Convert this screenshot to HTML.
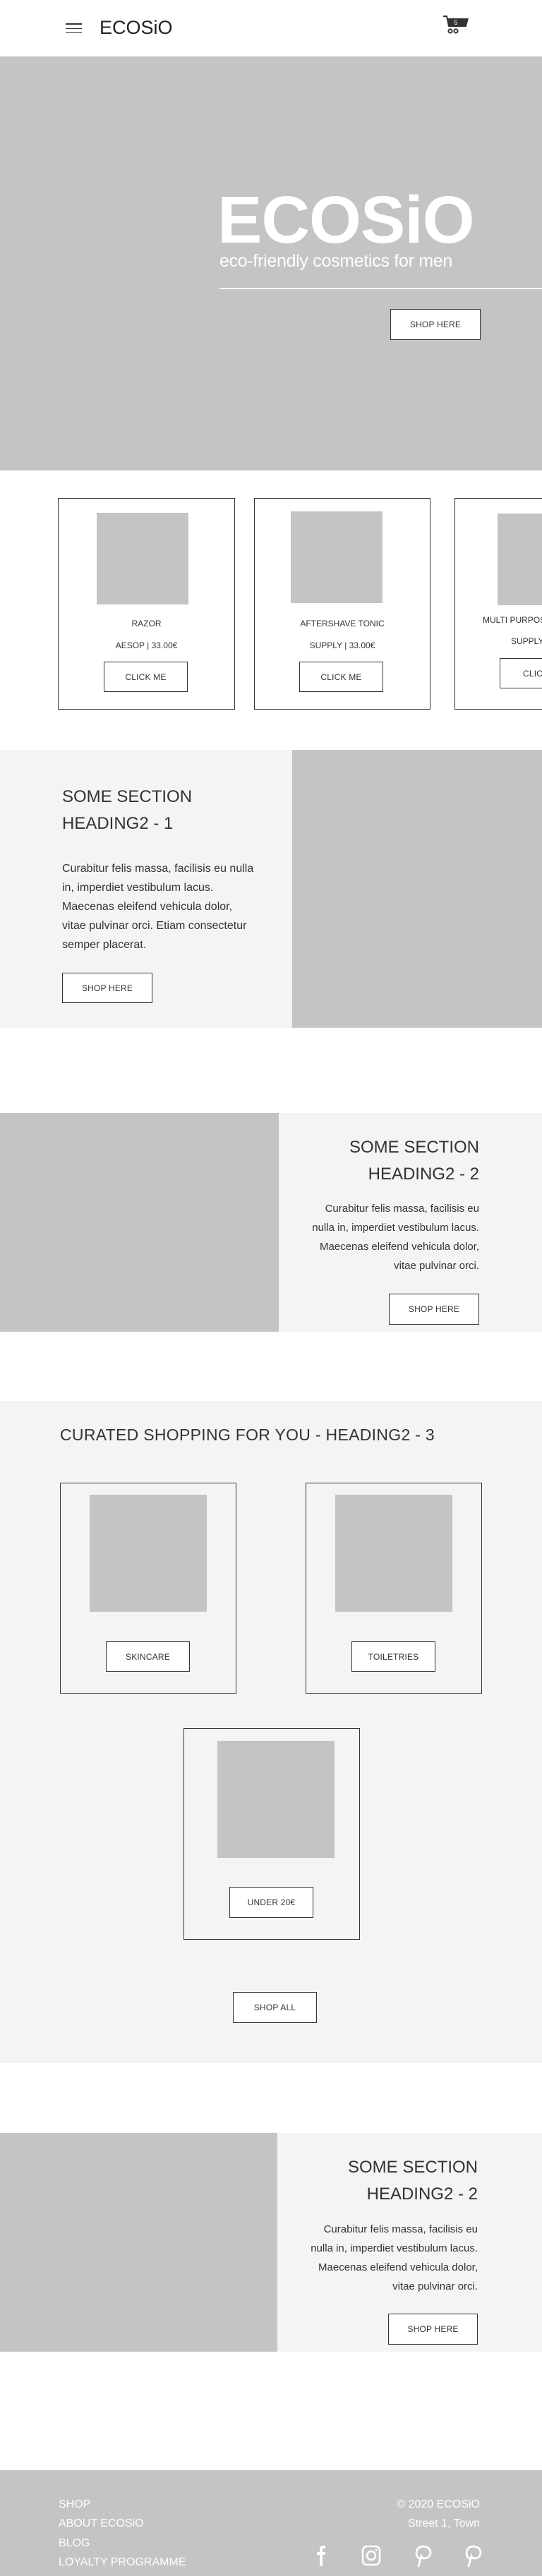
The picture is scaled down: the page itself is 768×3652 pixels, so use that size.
<!DOCTYPE html>
<html><head><meta charset="utf-8"><style>
*{margin:0;padding:0;box-sizing:border-box}
body{width:768px;height:3652px;position:relative;background:#fff;font-family:"Liberation Sans",sans-serif;color:#333;overflow:hidden}
.a{position:absolute}
.g{background:#c4c4c4}
.l{background:#f4f4f4}
.btn{position:absolute;border:1.5px solid #333;background:#fff;font-size:12px;color:#333;display:flex;align-items:center;justify-content:center;letter-spacing:.2px;white-space:nowrap;overflow:hidden}
.card{position:absolute;border:1.5px solid #333}
.t{position:absolute;font-size:12px;text-align:center;color:#333;white-space:nowrap}
h2{font-weight:normal;position:absolute;font-size:24px;line-height:38px;color:#333;white-space:nowrap}
p.b{position:absolute;font-size:15px;line-height:27px;color:#333;white-space:nowrap}
.f{position:absolute;color:#fff;font-size:16px;line-height:20px;white-space:nowrap}
</style></head><body>
<!-- header -->
<div class="a" style="left:93px;top:33px;width:23px;height:1.5px;background:#333"></div>
<div class="a" style="left:93px;top:39.5px;width:23px;height:1.5px;background:#333"></div>
<div class="a" style="left:93px;top:45.5px;width:23px;height:1.5px;background:#333"></div>
<div class="a" style="left:141px;top:24px;font-size:27px;line-height:30px;color:#222">ECOSiO</div>
<svg class="a" style="left:627px;top:21px" width="38" height="28" viewBox="0 0 38 28">
<path d="M1 2 H6 L9 16 H34" fill="none" stroke="#333" stroke-width="2"/>
<path d="M7 5 H37 L34 16 H9 Z" fill="#333"/>
<text x="19" y="14" font-size="9" fill="#fff" text-anchor="middle" font-family="Liberation Sans">5</text>
<circle cx="11" cy="23" r="2.6" fill="none" stroke="#333" stroke-width="2"/>
<circle cx="19" cy="23" r="2.6" fill="none" stroke="#333" stroke-width="2"/>
</svg>
<!-- hero -->
<div class="a g" style="left:0;top:80px;width:768px;height:587px"></div>
<div class="a" style="left:308px;top:262px;font-size:95px;font-weight:bold;color:#fff;line-height:100px;letter-spacing:-1px">ECOSiO</div>
<div class="a" style="left:311px;top:355px;font-size:25px;color:#fff;line-height:30px;letter-spacing:-0.3px;white-space:nowrap">eco-friendly cosmetics for men</div>
<div class="a" style="left:311px;top:408px;width:457px;height:1.5px;background:#fff"></div>
<div class="btn" style="left:553px;top:438px;width:128px;height:44px">SHOP HERE</div>
<!-- products -->
<div class="card" style="left:82px;top:706px;width:251px;height:300px"></div>
<div class="a g" style="left:137px;top:727px;width:130px;height:130px"></div>
<div class="t" style="left:82px;top:877px;width:251px">RAZOR</div>
<div class="t" style="left:82px;top:908px;width:251px">AESOP | 33.00€</div>
<div class="btn" style="left:147px;top:938px;width:119px;height:43px">CLICK ME</div>
<div class="card" style="left:360px;top:706px;width:250px;height:300px"></div>
<div class="a g" style="left:412px;top:725px;width:130px;height:130px"></div>
<div class="t" style="left:360px;top:877px;width:250px">AFTERSHAVE TONIC</div>
<div class="t" style="left:360px;top:908px;width:250px">SUPPLY | 33.00€</div>
<div class="btn" style="left:424px;top:938px;width:119px;height:43px">CLICK ME</div>
<div class="card" style="left:644px;top:706px;width:250px;height:300px"></div>
<div class="a g" style="left:705px;top:728px;width:130px;height:130px"></div>
<div class="t" style="left:684px;top:872px;text-align:left">MULTI PURPOSE SOAP</div>
<div class="t" style="left:724px;top:902px;text-align:left">SUPPLY | 33.00€</div>
<div class="btn" style="left:708px;top:933px;width:119px;height:43px;justify-content:flex-start;padding-left:32px">CLICK ME</div>
<!-- section 1 -->
<div class="a l" style="left:0;top:1063px;width:414px;height:394px"></div>
<div class="a g" style="left:414px;top:1063px;width:354px;height:394px"></div>
<h2 style="left:88px;top:1111px">SOME SECTION<br>HEADING2 - 1</h2>
<p class="b" style="left:88px;top:1218px;font-size:16px">Curabitur felis massa, facilisis eu nulla<br>in, imperdiet vestibulum lacus.<br>Maecenas eleifend vehicula dolor,<br>vitae pulvinar orci. Etiam consectetur<br>semper placerat.</p>
<div class="btn" style="left:88px;top:1379px;width:128px;height:43px">SHOP HERE</div>
<!-- section 2 -->
<div class="a g" style="left:0;top:1578px;width:395px;height:310px"></div>
<div class="a l" style="left:395px;top:1578px;width:373px;height:310px"></div>
<h2 style="right:89px;top:1608px;text-align:right">SOME SECTION<br>HEADING2 - 2</h2>
<p class="b" style="right:89px;top:1700px;text-align:right">Curabitur felis massa, facilisis eu<br>nulla in, imperdiet vestibulum lacus.<br>Maecenas eleifend vehicula dolor,<br>vitae pulvinar orci.</p>
<div class="btn" style="left:551px;top:1834px;width:128px;height:44px">SHOP HERE</div>
<!-- section 3 -->
<div class="a l" style="left:0;top:1986px;width:768px;height:939px"></div>
<h2 style="left:85px;top:2015px;font-size:23px;letter-spacing:.3px">CURATED SHOPPING FOR YOU - HEADING2 - 3</h2>
<div class="card" style="left:85px;top:2102px;width:250px;height:299px"></div>
<div class="a g" style="left:127px;top:2119px;width:166px;height:166px"></div>
<div class="btn" style="left:150px;top:2327px;width:119px;height:43px">SKINCARE</div>
<div class="card" style="left:433px;top:2102px;width:250px;height:299px"></div>
<div class="a g" style="left:475px;top:2119px;width:166px;height:166px"></div>
<div class="btn" style="left:498px;top:2327px;width:119px;height:43px">TOILETRIES</div>
<div class="card" style="left:260px;top:2450px;width:250px;height:300px"></div>
<div class="a g" style="left:308px;top:2468px;width:166px;height:166px"></div>
<div class="btn" style="left:325px;top:2675px;width:119px;height:44px">UNDER 20€</div>
<div class="btn" style="left:330px;top:2824px;width:119px;height:44px">SHOP ALL</div>
<!-- section 4 -->
<div class="a g" style="left:0;top:3024px;width:393px;height:310px"></div>
<div class="a l" style="left:393px;top:3024px;width:375px;height:310px"></div>
<h2 style="right:91px;top:3054px;text-align:right">SOME SECTION<br>HEADING2 - 2</h2>
<p class="b" style="right:91px;top:3147px;text-align:right">Curabitur felis massa, facilisis eu<br>nulla in, imperdiet vestibulum lacus.<br>Maecenas eleifend vehicula dolor,<br>vitae pulvinar orci.</p>
<div class="btn" style="left:550px;top:3280px;width:127px;height:44px">SHOP HERE</div>
<!-- footer -->
<div class="a g" style="left:0;top:3502px;width:768px;height:150px"></div>
<div class="f" style="left:83px;top:3541px">SHOP</div>
<div class="f" style="left:83px;top:3568px">ABOUT ECOSiO</div>
<div class="f" style="left:83px;top:3596px">BLOG</div>
<div class="f" style="left:83px;top:3623px">LOYALTY PROGRAMME</div>
<div class="f" style="right:88px;top:3541px;text-align:right">© 2020 ECOSiO</div>
<div class="f" style="right:88px;top:3568px;text-align:right">Street 1, Town</div>
<svg class="a" style="left:440px;top:3605px" width="250" height="36" viewBox="0 0 250 36">
<path d="M13 33 V17 H9 V13 H13 V9 Q13 4 18 4 H21 V8 H18 Q17 8 17 10 V13 H21 L20.5 17 H17 V33 Z" fill="#fff"/>
<rect x="74" y="5" width="24" height="26" rx="6" fill="none" stroke="#fff" stroke-width="2.5"/>
<circle cx="86" cy="18" r="6" fill="none" stroke="#fff" stroke-width="2.5"/>
<circle cx="93" cy="10" r="1.5" fill="#fff"/>
<path d="M154 22 Q150 20 150 14 Q151 5 160 5 Q170 6 170 14 Q169 22 161 22 Q158 22 157 19 L153 33" fill="none" stroke="#fff" stroke-width="2.8" stroke-linecap="round"/>
<path d="M225 22 Q221 20 221 14 Q222 5 231 5 Q241 6 241 14 Q240 22 232 22 Q229 22 228 19 L224 33" fill="none" stroke="#fff" stroke-width="2.8" stroke-linecap="round"/>
</svg>
</body></html>
